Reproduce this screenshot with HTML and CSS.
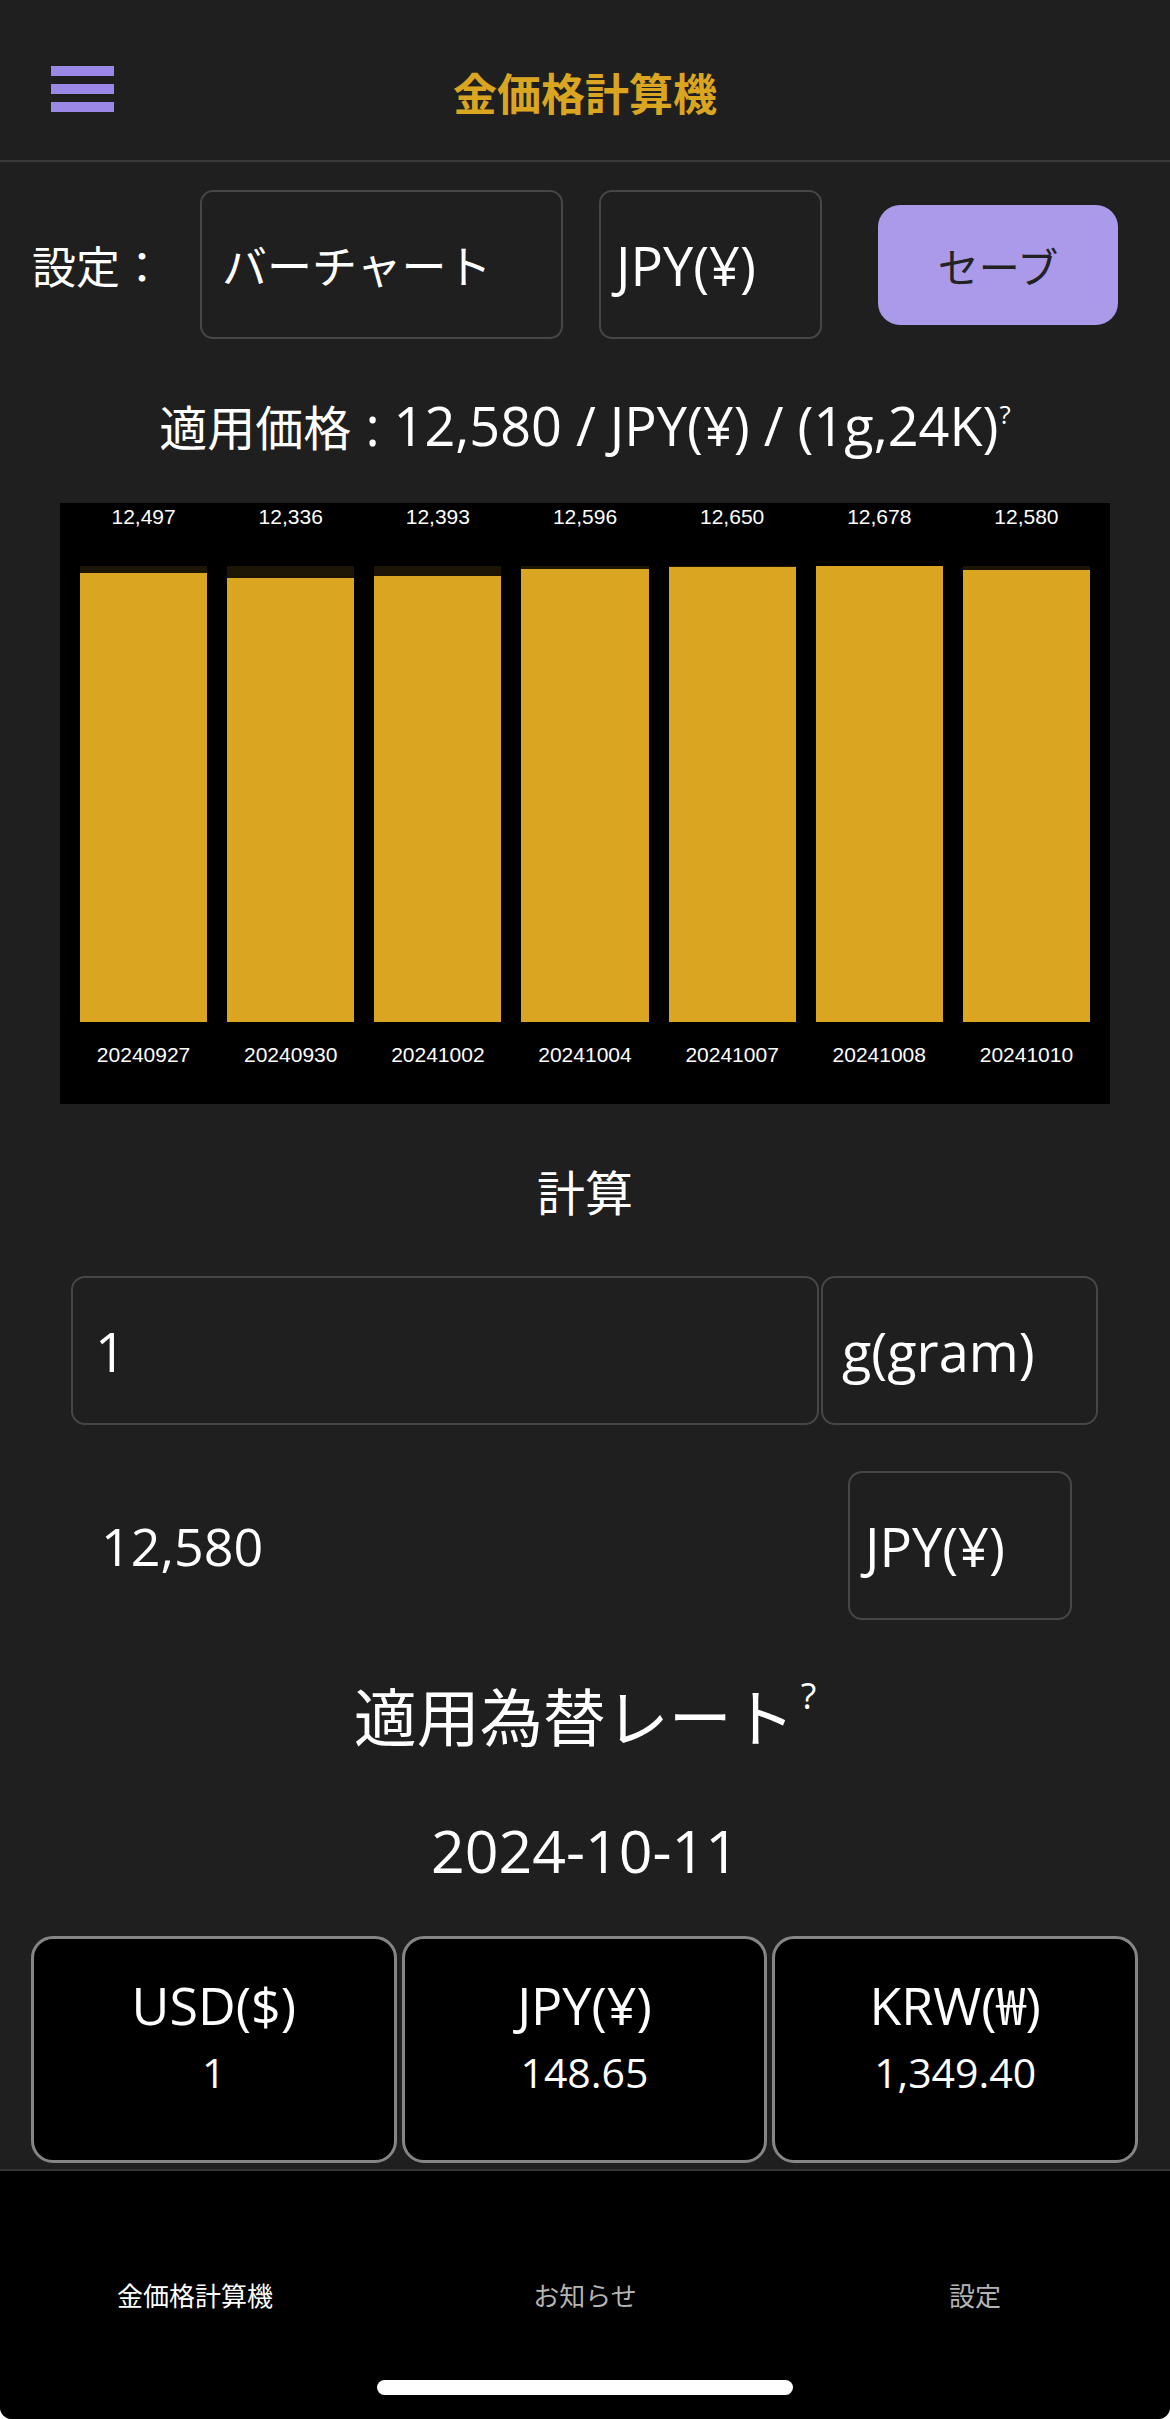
FILE: index.html
```html
<!DOCTYPE html>
<html lang="ja">
<head>
<meta charset="utf-8">
<title>金価格計算機</title>
<link rel="stylesheet" href="styles.css">
</head>
<body>
<div class="screen">
  <header class="topbar">
    <div class="menu"><span></span><span></span><span></span></div>
    <h1 class="title">金価格計算機</h1>
    <div></div>
  </header>
  <main class="content">
    <section class="settings">
      <span class="settings-label">設定：</span>
      <div class="select select-chart">バーチャート</div>
      <div class="select select-cur">JPY(¥)</div>
      <button class="save">セーブ</button>
    </section>
    <p class="price"><span class="ja">適用価格</span> : 12,580 / JPY(¥) / (1g,24K)<sup>?</sup></p>
    <section class="chart">
      <div class="col"><div class="val">12,497</div><div class="track"><div class="fill" style="height:98.57%"></div></div><div class="date">20240927</div></div>
      <div class="col"><div class="val">12,336</div><div class="track"><div class="fill" style="height:97.30%"></div></div><div class="date">20240930</div></div>
      <div class="col"><div class="val">12,393</div><div class="track"><div class="fill" style="height:97.75%"></div></div><div class="date">20241002</div></div>
      <div class="col"><div class="val">12,596</div><div class="track"><div class="fill" style="height:99.35%"></div></div><div class="date">20241004</div></div>
      <div class="col"><div class="val">12,650</div><div class="track"><div class="fill" style="height:99.78%"></div></div><div class="date">20241007</div></div>
      <div class="col"><div class="val">12,678</div><div class="track"><div class="fill" style="height:100%"></div></div><div class="date">20241008</div></div>
      <div class="col"><div class="val">12,580</div><div class="track"><div class="fill" style="height:99.23%"></div></div><div class="date">20241010</div></div>
    </section>
    <h2 class="calc-title">計算</h2>
    <div class="calc-row">
      <div class="field input">1</div>
      <div class="field unit">g(gram)</div>
    </div>
    <div class="result-row">
      <span class="result">12,580</span>
      <div class="field result-cur">JPY(¥)</div>
    </div>
    <h2 class="rate-title">適用為替レート<sup>?</sup></h2>
    <p class="rate-date">2024-10-11</p>
    <div class="cards">
      <div class="card"><div class="card-cur">USD($)</div><div class="card-val">1</div></div>
      <div class="card"><div class="card-cur">JPY(¥)</div><div class="card-val">148.65</div></div>
      <div class="card"><div class="card-cur">KRW(₩)</div><div class="card-val">1,349.40</div></div>
    </div>
  </main>
  <nav class="tabbar">
    <div class="tabs">
      <span class="tab active">金価格計算機</span>
      <span class="tab">お知らせ</span>
      <span class="tab">設定</span>
    </div>
    <div class="home-indicator"></div>
  </nav>
</div>
</body>
</html>
```
FILE: styles.css
```css
html, body {
  margin: 0;
  padding: 0;
  background: #ffffff;
}

.screen {
  width: 1170px;
  height: 2419px;
  background: #1f1f1f;
  display: flex;
  flex-direction: column;
  border-radius: 0 0 12px 12px;
  overflow: hidden;
  font-family: "Open Sans", "Noto Sans CJK JP", sans-serif;
  color: #ffffff;
}

.topbar {
  box-sizing: border-box;
  height: 162px;
  padding-top: 18px;
  border-bottom: 2px solid #3a3a3a;
  display: grid;
  grid-template-columns: 1fr auto 1fr;
  align-items: center;
}

.menu {
  margin-left: 51px;
  width: 63px;
  display: flex;
  flex-direction: column;
  gap: 8px;
}

.menu span {
  display: block;
  height: 10px;
  background: #9b87e6;
}

.title {
  margin: 5px 0 0;
  font-family: "Noto Sans CJK JP", sans-serif;
  font-weight: 700;
  font-size: 44px;
  line-height: 1;
  color: #daa520;
}

.content {
  flex: 1;
}

.settings {
  margin-top: 28px;
  padding-left: 32px;
  display: flex;
  align-items: center;
  height: 149px;
}

.settings-label {
  font-family: "Noto Sans CJK JP", sans-serif;
  font-size: 44px;
  width: 132px;
}

.select {
  box-sizing: border-box;
  height: 149px;
  border: 2px solid #464646;
  border-radius: 13px;
  display: flex;
  align-items: center;
  padding-left: 20px;
  font-size: 45px;
}

.select-chart {
  margin-left: 36px;
  width: 363px;
}

.select-cur {
  margin-left: 36px;
  width: 223px;
  padding-left: 15px;
  font-size: 54px;
}

.save {
  margin-left: 56px;
  width: 240px;
  height: 120px;
  border: none;
  border-radius: 22px;
  background: #ab99e9;
  color: #222222;
  font-family: "Noto Sans CJK JP", sans-serif;
  font-size: 41px;
  padding: 0;
}

.price {
  margin: 54px 0 0;
  text-align: center;
  font-size: 54px;
  line-height: 64px;
}

.price .ja {
  font-family: "Noto Sans CJK JP", sans-serif;
  font-size: 48px;
}

.price sup {
  font-size: 26px;
  line-height: 26px;
  vertical-align: top;
  position: relative;
  top: 8px;
  margin-left: 1px;
}

.chart {
  margin: 46px 60px 0;
  background: #000000;
  display: grid;
  grid-template-columns: repeat(7, 1fr);
  column-gap: 20px;
  padding: 0 20px 35px;
}

.col {
  display: flex;
  flex-direction: column;
}

.val, .date {
  font-family: "Liberation Sans", Arial, sans-serif;
  font-size: 21px;
  line-height: 28px;
  text-align: center;
  color: #ffffff;
}

.track {
  margin-top: 35px;
  height: 456px;
  background: #1d1506;
  display: flex;
  align-items: flex-end;
}

.fill {
  width: 100%;
  background: #daa520;
}

.date {
  margin-top: 19px;
}

.calc-title {
  margin: 54px 0 0;
  font-family: "Noto Sans CJK JP", sans-serif;
  font-weight: 400;
  font-size: 48px;
  line-height: 64px;
  text-align: center;
}

.calc-row {
  margin-top: 54px;
  padding-left: 71px;
  display: flex;
}

.field {
  box-sizing: border-box;
  height: 149px;
  border: 2px solid #464646;
  border-radius: 14px;
  display: flex;
  align-items: center;
  font-size: 54px;
}

.input {
  width: 748px;
  padding-left: 22px;
}

.unit {
  width: 277px;
  margin-left: 2px;
  padding-left: 19px;
}

.result-row {
  margin-top: 46px;
  padding: 0 98px 0 101px;
  display: flex;
  justify-content: space-between;
  align-items: center;
}

.result {
  font-size: 52px;
}

.result-cur {
  width: 224px;
  padding-left: 15px;
  font-size: 54px;
}

.rate-title {
  margin: 54px 0 0;
  font-family: "Noto Sans CJK JP", sans-serif;
  font-weight: 400;
  font-size: 63px;
  line-height: 80px;
  text-align: center;
}

.rate-title sup {
  font-family: "Open Sans", sans-serif;
  font-size: 36px;
  line-height: 36px;
  vertical-align: top;
  position: relative;
  top: 4px;
  margin-left: 6px;
}

.rate-date {
  margin: 57px 0 0;
  font-size: 59px;
  line-height: 79px;
  text-align: center;
}

.cards {
  margin-top: 46px;
  padding: 0 32px 0 31px;
  display: grid;
  grid-template-columns: repeat(3, 1fr);
  column-gap: 5px;
}

.card {
  box-sizing: border-box;
  height: 227px;
  background: #000000;
  border: 3px solid #858585;
  border-radius: 22px;
  padding-top: 36px;
  text-align: center;
}

.card-cur {
  font-size: 52px;
  line-height: 60px;
}

.card-val {
  margin-top: 9px;
  font-size: 41px;
  line-height: 56px;
}

.tabbar {
  box-sizing: border-box;
  height: 250px;
  background: #000000;
  border-top: 2px solid #333333;
  display: flex;
  flex-direction: column;
  padding-top: 106px;
}

.tabs {
  display: grid;
  grid-template-columns: repeat(3, 1fr);
}

.tab {
  font-family: "Noto Sans CJK JP", sans-serif;
  font-size: 26px;
  line-height: 36px;
  text-align: center;
  color: #b4b4b4;
}

.tab.active {
  color: #ffffff;
}

.home-indicator {
  margin: 67px auto 0;
  width: 416px;
  height: 15px;
  border-radius: 8px;
  background: #ffffff;
}
```
